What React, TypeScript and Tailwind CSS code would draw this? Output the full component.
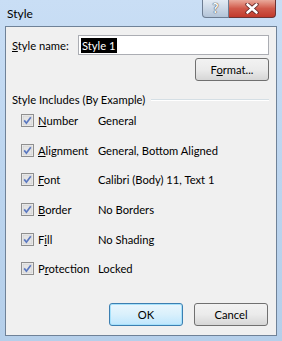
import React from 'react';

const rows = [
  { label: 'Number', key: 'N', pre: '', rest: 'umber', value: 'General' },
  { label: 'Alignment', key: 'A', pre: '', rest: 'lignment', value: 'General, Bottom Aligned' },
  { label: 'Font', key: 'F', pre: '', rest: 'ont', value: 'Calibri (Body) 11, Text 1' },
  { label: 'Border', key: 'B', pre: '', rest: 'order', value: 'No Borders' },
  { label: 'Fill', key: 'i', pre: 'F', rest: 'll', value: 'No Shading' },
  { label: 'Protection', key: 'r', pre: 'P', rest: 'otection', value: 'Locked' },
];

function CheckBox() {
  return (
    <svg width="13" height="13" viewBox="0 0 13 13" className="block">
      <rect x="0.5" y="0.5" width="12" height="12" fill="#f4f4f4" stroke="#8f8f8f" />
      <rect x="2" y="2" width="9" height="9" fill="#e4e4e4" stroke="#c8c8c8" strokeWidth="0.6" />
      <path d="M3.2 6.4 L5.4 9.2 L9.8 3.2" fill="none" stroke="#5b78c0" strokeWidth="1.7" />
    </svg>
  );
}

export default function App() {
  return (
    <div
      className="w-[282px] h-[341px] flex flex-col bg-gradient-to-b from-[#c9def5] via-[#bcd5ef] to-[#b5cfea] px-[5px] pb-[5px] text-[11.2px] leading-[15px] text-black"
      style={{ fontFamily: 'Lato, "Noto Sans", sans-serif' }}
    >
      {/* title bar */}
      <div className="h-[26px] flex items-start justify-between shrink-0">
        <span className="mt-[6px] ml-[2px] text-[12px]">Style</span>
        <div className="flex mr-[1px]">
          <div className="w-[27px] h-[18px] rounded-bl-[4px] border border-[#6d7d92] border-t-0 bg-gradient-to-b from-[#e3ebf4] to-[#b3c4d8] flex items-center justify-center text-white text-[13px] font-bold [text-shadow:0_0_1px_#333,0_0_1px_#333]">
            ?
          </div>
          <div className="w-[47px] h-[18px] rounded-br-[4px] border border-[#6d3333] border-t-0 border-l-0 bg-gradient-to-b from-[#e9a99b] via-[#d0594a] to-[#c1392b] flex items-center justify-center">
            <svg width="14" height="11" viewBox="0 0 14 11">
              <path d="M2.5 1.5 L11.5 9.5 M11.5 1.5 L2.5 9.5" stroke="#5a2020" strokeWidth="4.2" strokeLinecap="round" />
              <path d="M2.5 1.5 L11.5 9.5 M11.5 1.5 L2.5 9.5" stroke="#ffffff" strokeWidth="2.6" strokeLinecap="round" />
            </svg>
          </div>
        </div>
      </div>

      {/* client area */}
      <div className="flex-1 border border-[#6f8298] bg-[#f0f0f0] flex flex-col px-[6px] pt-[8px]">
        <div className="flex items-center">
          <span className="w-[66px]">
            <span className="underline">S</span>tyle name:
          </span>
          <div className="flex-1 h-[20px] border border-[#abadb3] bg-white flex items-center px-[2px] mr-[1px]">
            <span className="bg-black text-white leading-[15px] px-[1px]">Style 1</span>
          </div>
        </div>
        <div className="flex justify-end mt-[3px] mr-[1px]">
          <button className="w-[74px] h-[23px] rounded-[3px] border border-[#707070] bg-gradient-to-b from-[#f2f2f2] via-[#ebebeb] to-[#d6d6d6]">
            F<span className="underline">o</span>rmat...
          </button>
        </div>
        <div className="flex items-center h-[13px] mt-[12px]">
          <span>Style Includes (By Example)</span>
          <div className="flex-1 ml-[6px] mr-[1px] h-[2px] border-t border-[#d5dfe5] border-b border-b-white" />
        </div>

        <div className="grid grid-cols-[17px_60px_1fr] auto-rows-[29.6px] items-center pl-[9px]">
          {rows.map((r) => (
            <React.Fragment key={r.label}>
              <CheckBox />
              <span className="whitespace-nowrap">
                {r.pre}
                <span className="underline">{r.key}</span>
                {r.rest}
              </span>
              <span className="whitespace-nowrap">{r.value}</span>
            </React.Fragment>
          ))}
        </div>

        <div className="flex-1" />
        <div className="flex justify-end gap-[11px] mb-[9px] mr-[2px]">
          <button className="w-[74px] h-[23px] rounded-[3px] border border-[#3c7fb1] bg-gradient-to-b from-[#eaf6fd] via-[#d9f0fc] to-[#bee6fd] shadow-[inset_0_0_0_1px_#a6e1fb]">
            OK
          </button>
          <button className="w-[74px] h-[23px] rounded-[3px] border border-[#707070] bg-gradient-to-b from-[#f2f2f2] via-[#ebebeb] to-[#d6d6d6]">
            Cancel
          </button>
        </div>
      </div>
    </div>
  );
}
